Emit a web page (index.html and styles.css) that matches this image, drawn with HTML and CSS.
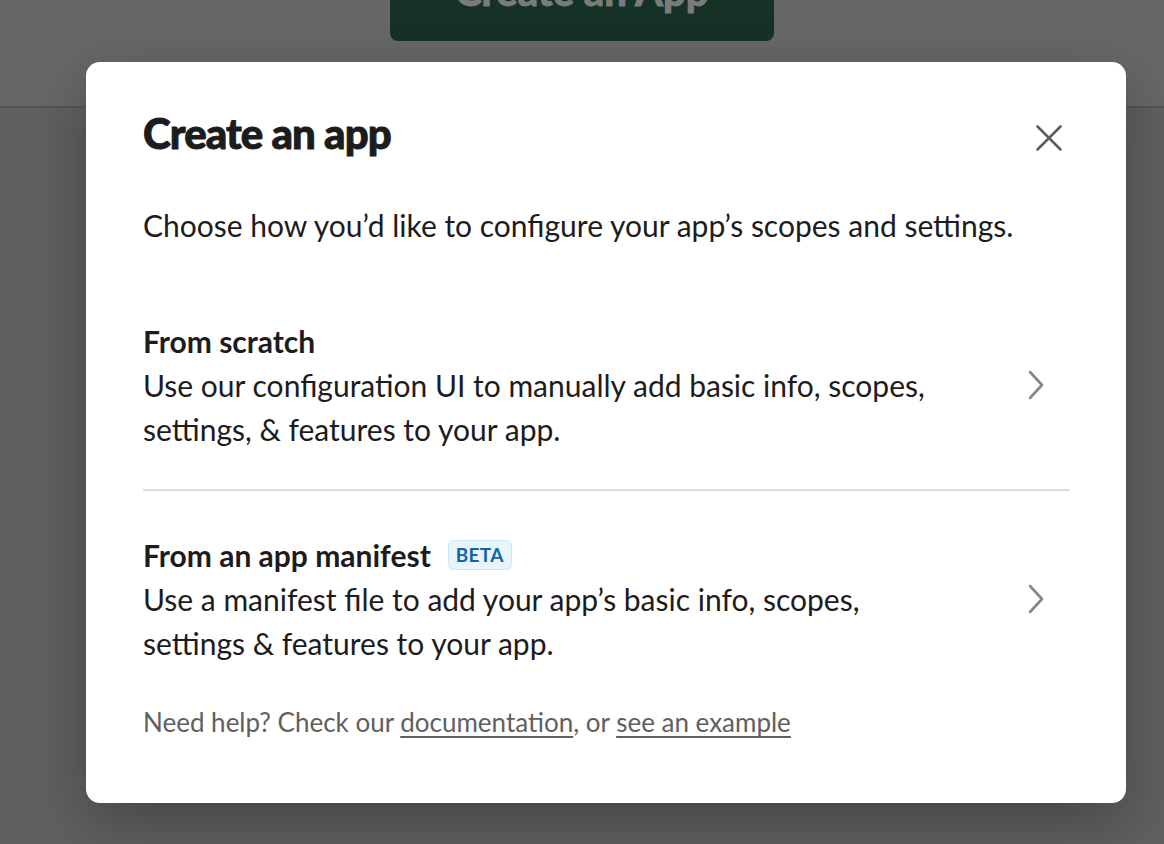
FILE: index.html
```html
<!DOCTYPE html>
<html lang="en">
<head>
<meta charset="utf-8">
<title>Create an app</title>
<link rel="stylesheet" href="styles.css">
</head>
<body>
<div class="page">
  <header class="topbar">
    <button class="create-btn" type="button">Create an App</button>
  </header>
  <main class="page-body"></main>
</div>

<div class="overlay">
  <div class="modal" role="dialog" aria-labelledby="modal-title">
    <div class="modal-head">
      <h1 id="modal-title" class="modal-title">Create an app</h1>
      <button class="close-btn" type="button" aria-label="Close">
        <svg width="28" height="28" viewBox="0 0 28 28" aria-hidden="true">
          <path d="M2.5 2.5 L25.5 25.5 M25.5 2.5 L2.5 25.5" stroke="#5e5d5e" stroke-width="2.6" stroke-linecap="round" fill="none"/>
        </svg>
      </button>
    </div>

    <p class="intro">Choose how you’d like to configure your app’s scopes and settings.</p>

    <a class="option" href="#">
      <div class="option-text">
        <div class="option-title">From scratch</div>
        <div class="option-desc">Use our configuration UI to manually add basic info, scopes, settings, &amp; features to your app.</div>
      </div>
      <svg class="chevron" width="16" height="30" viewBox="0 0 16 30" aria-hidden="true">
        <path d="M2 2 L14 15 L2 28" stroke="#868686" stroke-width="2.6" stroke-linecap="round" stroke-linejoin="round" fill="none"/>
      </svg>
    </a>

    <div class="divider"></div>

    <a class="option" href="#">
      <div class="option-text">
        <div class="option-title">From an app manifest <span class="badge">BETA</span></div>
        <div class="option-desc">Use a manifest file to add your app’s basic info, scopes, settings &amp; features to your app.</div>
      </div>
      <svg class="chevron" width="16" height="30" viewBox="0 0 16 30" aria-hidden="true">
        <path d="M2 2 L14 15 L2 28" stroke="#868686" stroke-width="2.6" stroke-linecap="round" stroke-linejoin="round" fill="none"/>
      </svg>
    </a>

    <p class="help">Need help? Check our <a href="#">documentation</a>, or <a href="#">see an example</a></p>
  </div>
</div>
</body>
</html>
```

FILE: styles.css
```css
* {
  box-sizing: border-box;
}

html, body {
  margin: 0;
  padding: 0;
  height: 100%;
}

body {
  font-family: Lato, "Noto Sans", "Liberation Sans", sans-serif;
  background: #626262;
  overflow: hidden;
}

.page {
  height: 100%;
  display: flex;
  flex-direction: column;
}

.topbar {
  height: 108px;
  background: #676767;
  border-bottom: 2px solid #555555;
  display: flex;
  justify-content: center;
  align-items: flex-start;
  overflow: hidden;
}

.create-btn {
  margin-top: -40px;
  width: 384px;
  height: 81px;
  border: none;
  border-radius: 8px;
  background: #163126;
  color: #7b7b7b;
  font-family: "Lato Black", Lato, "Noto Sans", sans-serif;
  font-weight: 900;
  font-size: 40px;
  line-height: 40px;
  -webkit-text-stroke: 0.8px #7b7b7b;
  padding: 11px 0 0;
  display: flex;
  justify-content: center;
  align-items: flex-start;
}

.page-body {
  flex: 1;
  background: #606060;
}

.overlay {
  position: absolute;
  inset: 0;
  display: flex;
  align-items: flex-start;
  padding: 62px 0 0 86px;
}

.modal {
  width: 1040px;
  height: 741px;
  background: #ffffff;
  border-radius: 14px;
  box-shadow: 0 20px 60px rgba(0, 0, 0, 0.28);
  padding: 43px 56px 0 57px;
  color: #1d1c1d;
}

.modal-head {
  display: flex;
  justify-content: space-between;
  align-items: flex-start;
}

.modal-title {
  margin: 0;
  font-family: "Lato Black", Lato, "Noto Sans", sans-serif;
  font-weight: 900;
  font-size: 42px;
  line-height: 56px;
  letter-spacing: -0.9px;
  -webkit-text-stroke: 0.9px #1d1c1d;
  color: #1d1c1d;
}

.close-btn {
  margin-top: 11px;
  margin-right: -1px;
  width: 44px;
  height: 44px;
  border: none;
  background: transparent;
  padding: 0;
  display: flex;
  align-items: center;
  justify-content: center;
}

.intro {
  margin: 42px 0 30px;
  font-size: 30px;
  line-height: 44px;
}

.option {
  display: flex;
  align-items: center;
  padding: 42px 0 38px;
  color: inherit;
  text-decoration: none;
}

.option-text {
  flex: 1;
}

.option-title {
  font-weight: 700;
  font-size: 30px;
  line-height: 44px;
  display: flex;
  align-items: center;
}

.option-desc {
  font-size: 30px;
  line-height: 44px;
  max-width: 800px;
}

.chevron {
  flex: none;
  margin-right: 26px;
}

.badge {
  margin-left: 17px;
  height: 30px;
  padding: 0 7px;
  border: 1px solid #cfe6f3;
  border-radius: 6px;
  background: #e8f5fa;
  color: #1264a3;
  font-size: 19px;
  font-weight: 700;
  line-height: 28px;
  letter-spacing: 0.3px;
}

.divider {
  height: 2px;
  background: #dddddd;
}

.help {
  margin: 3px 0 0;
  font-size: 26px;
  line-height: 32px;
  color: #616061;
}

.help a {
  color: #616061;
  text-decoration: underline;
  text-underline-offset: 4px;
}
```
